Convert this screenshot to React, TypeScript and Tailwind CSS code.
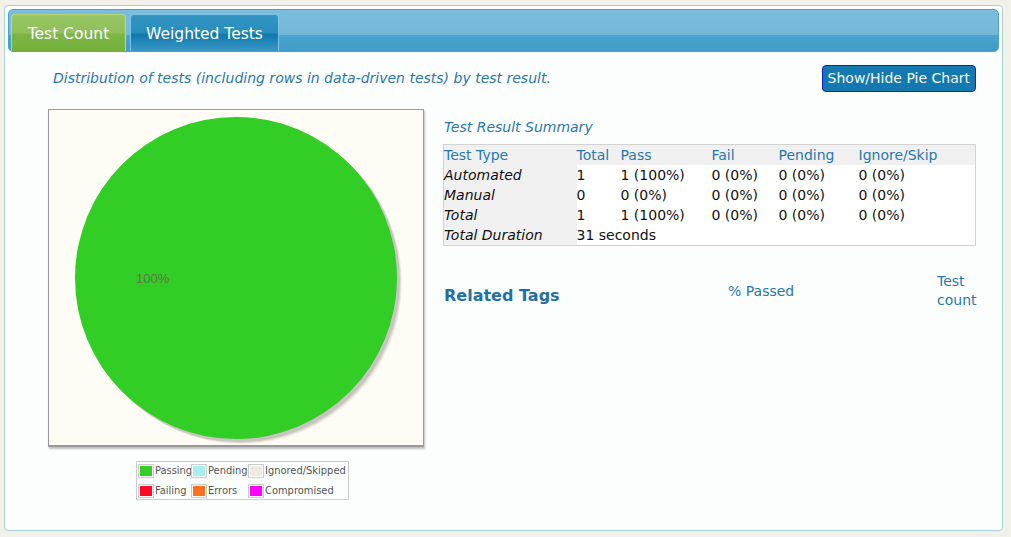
import React from 'react'

const font = { fontFamily: '"DejaVu Sans", Verdana, sans-serif' }

const rows = [
  { label: 'Automated', total: '1', pass: '1 (100%)', fail: '0 (0%)', pending: '0 (0%)', skip: '0 (0%)' },
  { label: 'Manual', total: '0', pass: '0 (0%)', fail: '0 (0%)', pending: '0 (0%)', skip: '0 (0%)' },
  { label: 'Total', total: '1', pass: '1 (100%)', fail: '0 (0%)', pending: '0 (0%)', skip: '0 (0%)' }
]

const legend = [
  [
    { label: 'Passing', color: 'bg-[#32cd25]' },
    { label: 'Pending', color: 'bg-[#a8f0f0]' },
    { label: 'Ignored/Skipped', color: 'bg-[#eeebe0]' }
  ],
  [
    { label: 'Failing', color: 'bg-[#ff0a22]' },
    { label: 'Errors', color: 'bg-[#ff6f20]' },
    { label: 'Compromised', color: 'bg-[#ff00ff]' }
  ]
]

function PieChart() {
  return (
    <div className="flex flex-col w-[376px]">
      <div className="w-[376px] h-[338px] border border-[#999] border-b-2 bg-[#fffcf6] shadow-[1px_2px_2px_rgba(0,0,0,0.25)]">
        <svg width="374" height="335" viewBox="0 0 374 335">
          <circle cx="192" cy="173" r="161" fill="#000" opacity="0.05" />
          <circle cx="191" cy="172" r="161" fill="#000" opacity="0.08" />
          <circle cx="190" cy="171" r="161" fill="#000" opacity="0.1" />
          <circle cx="187" cy="168" r="161" fill="#32cd25" />
          <text x="87" y="173" fill="#5c7a4c" fontSize="13" fontFamily="Liberation Sans, Arial, sans-serif">
            100%
          </text>
        </svg>
      </div>
      <div
        className="mt-[14px] ml-[88px] w-[213px] border border-[#ccc] px-[1px] pt-[1px] text-[11px] text-[#545454] flex flex-col gap-[4px]"
        style={{ fontFamily: '"DejaVu Sans Condensed", "DejaVu Sans", sans-serif' }}
      >
        {legend.map((row, i) => (
          <div key={i} className="flex h-[16px]">
            {row.map((item, j) => (
              <div key={item.label} className={`flex items-center ${j === 0 ? 'w-[53px]' : j === 1 ? 'w-[57px]' : 'flex-1'}`}>
                <span className="border border-[#ccc] p-[1px] mr-[1px]">
                  <span className={`block w-[12px] h-[10px] ${item.color}`} />
                </span>
                {item.label}
              </div>
            ))}
          </div>
        ))}
      </div>
    </div>
  )
}

function Summary() {
  const cell = 'h-[20px] leading-[20px] p-0'
  return (
    <div className="flex-1 pt-[8px]">
      <div className="italic text-[#2878ad] text-[14px] leading-[20px] pl-[1px]">Test Result Summary</div>
      <table className="mt-[7px] w-full border border-[#d3d3d3] text-[14px] border-collapse">
        <thead>
          <tr className="bg-[#f0f0f0] text-[#2878ad] text-left">
            <th className={`${cell} font-normal w-[133px]`}>Test Type</th>
            <th className={`${cell} font-normal w-[44px]`}>Total</th>
            <th className={`${cell} font-normal w-[91px]`}>Pass</th>
            <th className={`${cell} font-normal w-[67px]`}>Fail</th>
            <th className={`${cell} font-normal w-[80px]`}>Pending</th>
            <th className={`${cell} font-normal`}>Ignore/Skip</th>
          </tr>
        </thead>
        <tbody className="text-[#111]">
          {rows.map((r) => (
            <tr key={r.label}>
              <td className={`${cell} bg-[#f0f0f0] italic`}>{r.label}</td>
              <td className={`${cell} bg-white`}>{r.total}</td>
              <td className={`${cell} bg-white`}>{r.pass}</td>
              <td className={`${cell} bg-white`}>{r.fail}</td>
              <td className={`${cell} bg-white`}>{r.pending}</td>
              <td className={`${cell} bg-white`}>{r.skip}</td>
            </tr>
          ))}
          <tr>
            <td className={`${cell} bg-[#f0f0f0] italic`}>Total Duration</td>
            <td className={`${cell} bg-white`} colSpan={5}>
              31 seconds
            </td>
          </tr>
        </tbody>
      </table>
      <div className="flex items-center mt-[26px] text-[#2878ad] text-[14px]">
        <h3 className="w-[285px] pl-[1px] mt-[10px] text-[16px] font-bold text-[#1f70a6]">Related Tags</h3>
        <div className="flex-1">% Passed</div>
        <div className="w-[39px] leading-[19px]">
          Test
          <br />
          count
        </div>
      </div>
    </div>
  )
}

export default function App() {
  return (
    <div className="w-[1011px] h-[537px] bg-[#f1f1ea] pt-[5px] pl-[4px]" style={font}>
      <div className="w-[999px] h-[526px] border border-[#a9cfe3] rounded-[4px] bg-[#fcfefe] p-[3px]">
        <div className="h-[43px] rounded-[5px] border border-[#4d9fcc] bg-[linear-gradient(to_bottom,#7cbddb_0%,#74b7d7_60%,#4aa4cd_62%,#3f9cc8_100%)] flex items-end pl-[2px] gap-[4px]">
          <div className="w-[115px] h-[37px] rounded-t-[4px] border border-b-0 border-[#b6dc7c] bg-[linear-gradient(to_bottom,#97c564_0%,#8fc05a_50%,#7db545_54%,#76b13c_100%)] text-white text-[15.5px] flex items-center justify-center pt-[3px]">
            Test Count
          </div>
          <div className="w-[149px] h-[37px] rounded-t-[4px] border border-b-0 border-[#7cc6e8] bg-[linear-gradient(to_bottom,#3294c2_0%,#2a8ebd_48%,#0f78ad_55%,#3b98c6_100%)] text-white text-[15.5px] flex items-center justify-center pt-[3px]">
            Weighted Tests
          </div>
        </div>
        <div className="flex items-center justify-between mt-[13px] pl-[45px] pr-[23px]">
          <div className="italic text-[#2878ad] text-[14px]">
            Distribution of tests (including rows in data-driven tests) by test result.
          </div>
          <button className="h-[27px] px-[5px] bg-[#1479b0] border border-[#1a1ad0] rounded-[4px] text-[#f4f8ff] text-[14px]">
            Show/Hide Pie Chart
          </button>
        </div>
        <div className="flex mt-[17px] pl-[40px] pr-[23px] gap-[19px]">
          <PieChart />
          <Summary />
        </div>
      </div>
    </div>
  )
}
